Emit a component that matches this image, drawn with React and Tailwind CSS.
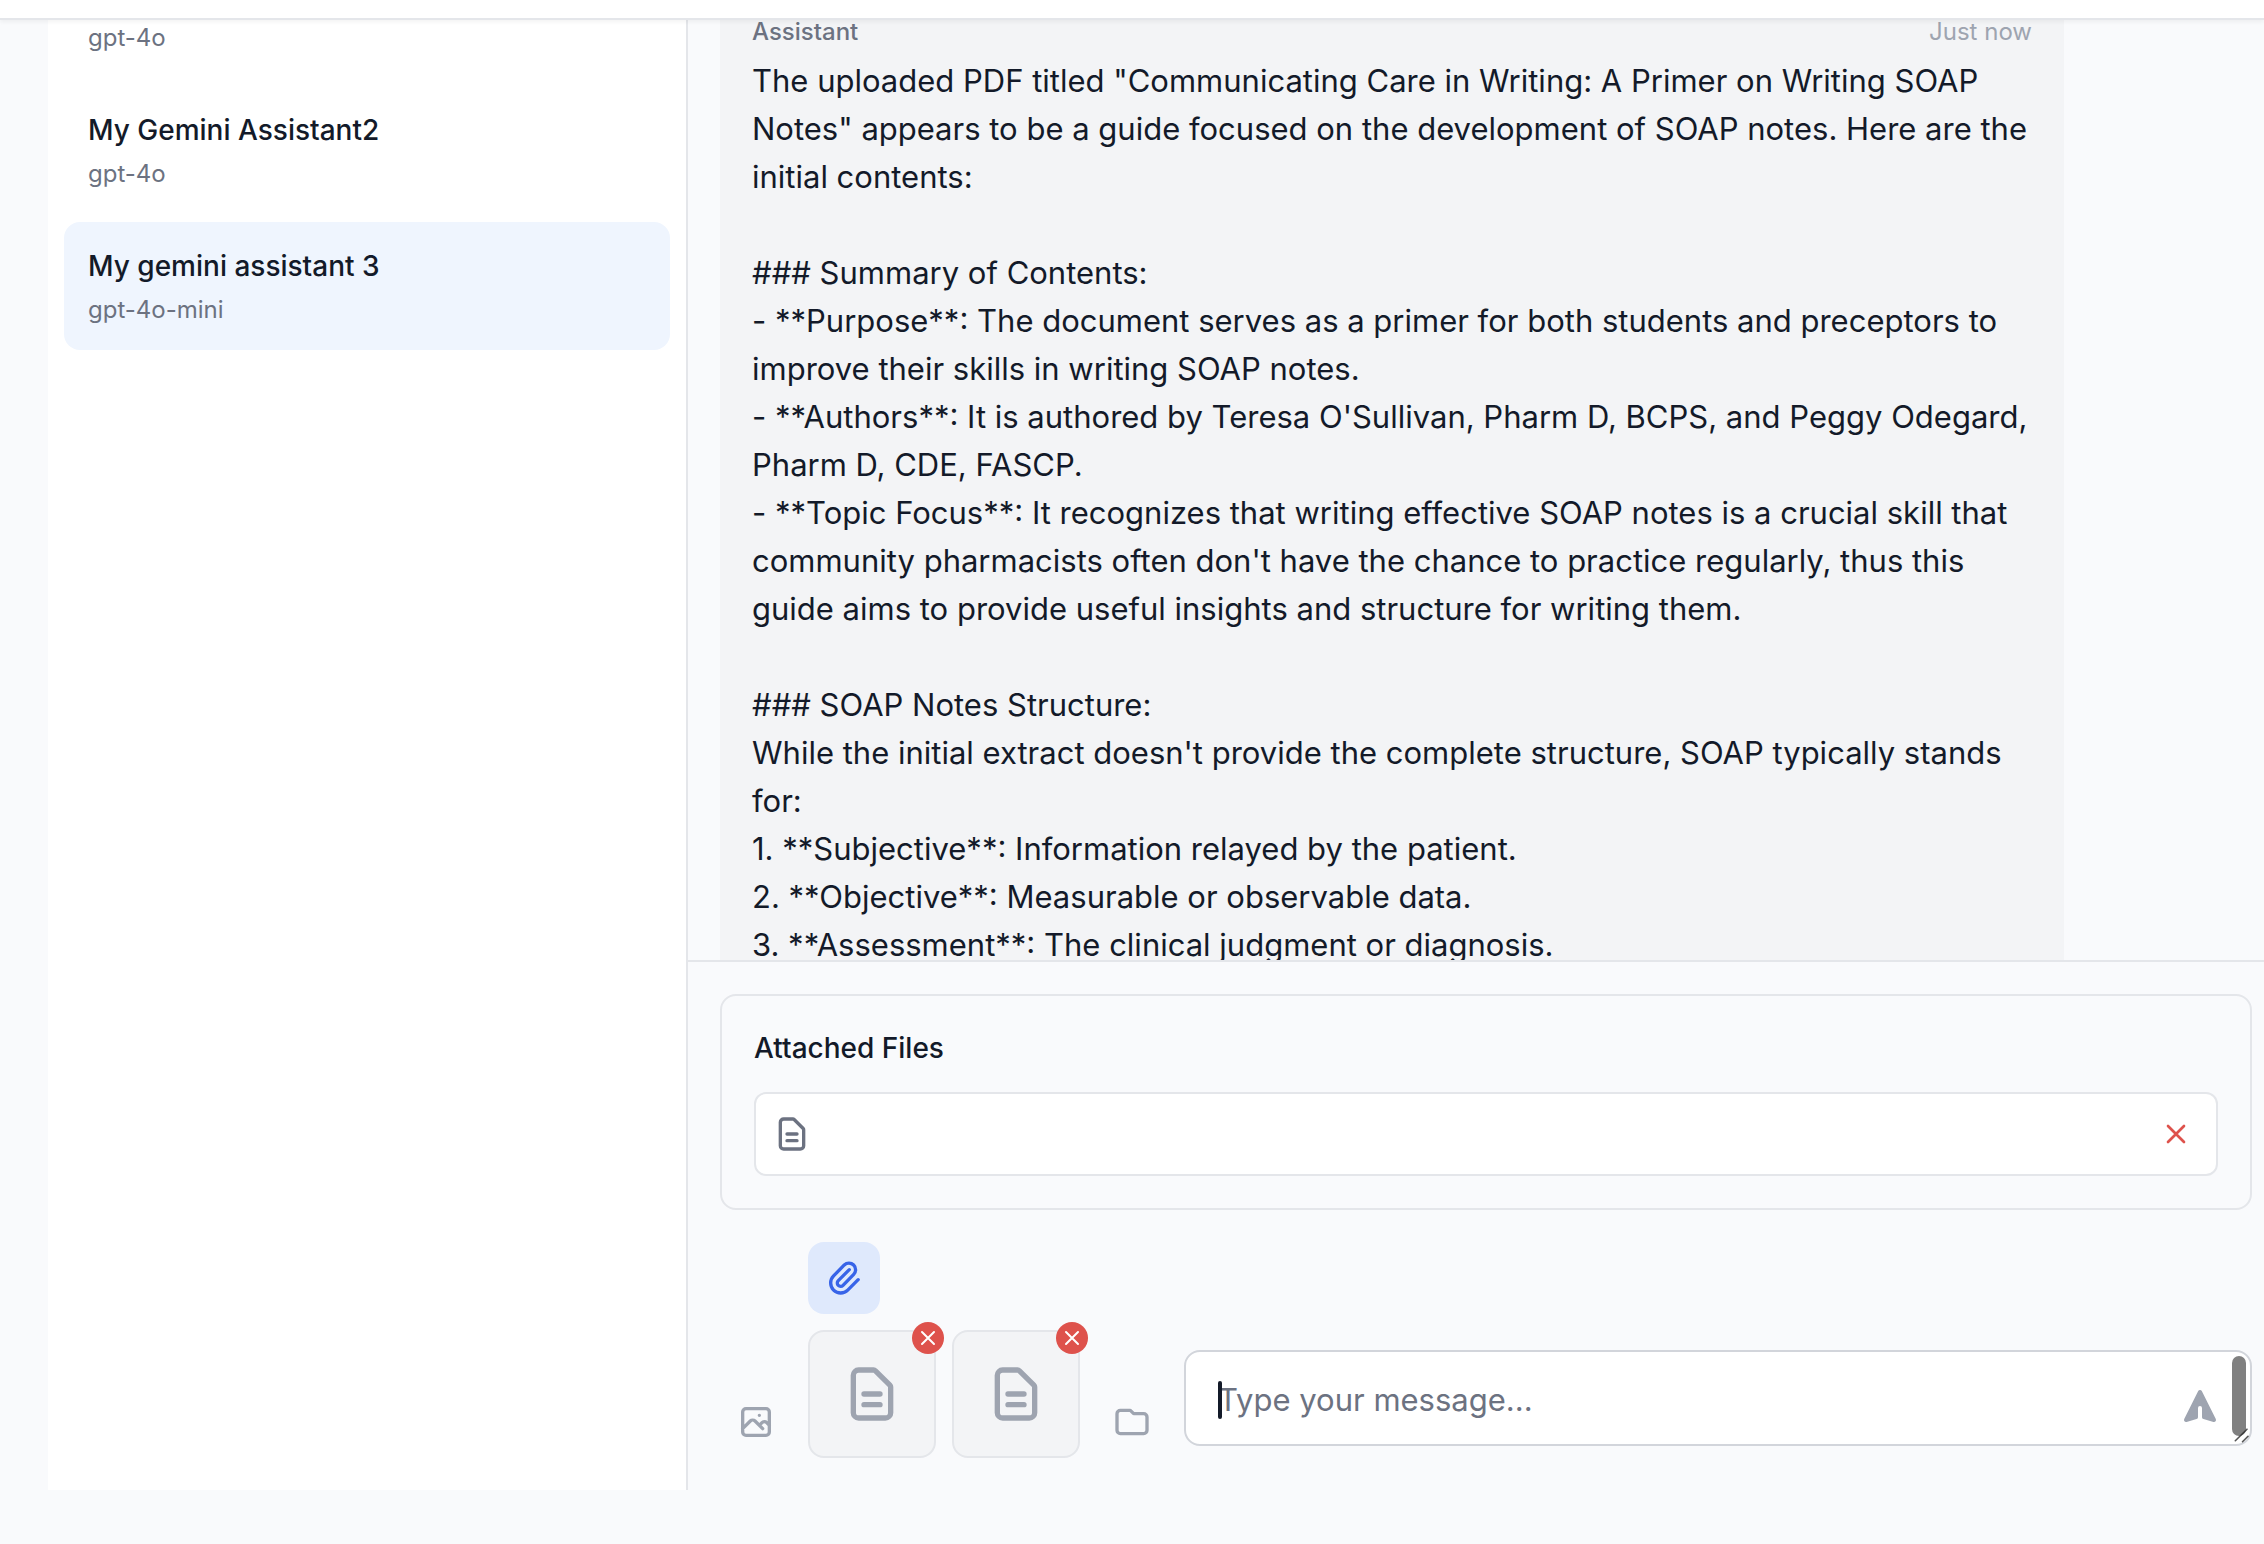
const messageLines = [
  'The uploaded PDF titled "Communicating Care in Writing: A Primer on Writing SOAP',
  'Notes" appears to be a guide focused on the development of SOAP notes. Here are the',
  'initial contents:',
  '',
  '### Summary of Contents:',
  '- **Purpose**: The document serves as a primer for both students and preceptors to',
  'improve their skills in writing SOAP notes.',
  "- **Authors**: It is authored by Teresa O'Sullivan, Pharm D, BCPS, and Peggy Odegard,",
  'Pharm D, CDE, FASCP.',
  '- **Topic Focus**: It recognizes that writing effective SOAP notes is a crucial skill that',
  "community pharmacists often don't have the chance to practice regularly, thus this",
  'guide aims to provide useful insights and structure for writing them.',
  '',
  '### SOAP Notes Structure:',
  "While the initial extract doesn't provide the complete structure, SOAP typically stands",
  'for:',
  '1. **Subjective**: Information relayed by the patient.',
  '2. **Objective**: Measurable or observable data.',
  '3. **Assessment**: The clinical judgment or diagnosis.',
];

function StrokeIcon({ d, className }) {
  return (
    <svg
      className={className}
      viewBox="0 0 24 24"
      fill="none"
      stroke="currentColor"
      strokeWidth="2"
      strokeLinecap="round"
      strokeLinejoin="round"
      aria-hidden="true"
    >
      <path d={d} />
    </svg>
  );
}

const DOCUMENT =
  'M9 12h6m-6 4h6m2 5H7a2 2 0 01-2-2V5a2 2 0 012-2h5.586a1 1 0 01.707.293l5.414 5.414a1 1 0 01.293.707V19a2 2 0 01-2 2z';
const CROSS = 'M6 18L18 6M6 6l12 12';
const CLIP =
  'M15.172 7l-6.586 6.586a2 2 0 102.828 2.828l6.414-6.586a4 4 0 00-5.656-5.656l-6.415 6.585a6 6 0 108.486 8.486L20.5 13';
const IMAGE =
  'M4 16l4.586-4.586a2 2 0 012.828 0L16 16m-2-2l1.586-1.586a2 2 0 012.828 0L20 14m-6-6h.01M6 20h12a2 2 0 002-2V6a2 2 0 00-2-2H6a2 2 0 00-2 2v12a2 2 0 002 2z';
const FOLDER = 'M3 7v10a2 2 0 002 2h14a2 2 0 002-2V9a2 2 0 00-2-2h-6l-2-2H5a2 2 0 00-2 2z';
const SEND =
  'M10.894 2.553a1 1 0 00-1.788 0l-7 14a1 1 0 001.169 1.409l5-1.429A1 1 0 009 15.571V11a1 1 0 112 0v4.571a1 1 0 00.725.962l5 1.428a1 1 0 001.17-1.408l-7-14z';

function AssistantItem({ name, model, active }) {
  return (
    <button
      type="button"
      className={
        'block w-full rounded-2xl p-6 text-left ' + (active ? 'bg-[#eff5fe]' : 'bg-white')
      }
    >
      <span className="mb-2 block text-[28px] leading-10 font-medium text-[#131a29]">{name}</span>
      <span className="block text-2xl leading-8 text-[#6c7281]">{model}</span>
    </button>
  );
}

function Sidebar() {
  return (
    <aside className="w-[640px] shrink-0 overflow-hidden border-r-2 border-[#e4e6ea] bg-white px-4 pt-0.5">
      <nav aria-label="Assistants" className="flex flex-col gap-2">
        <button type="button" className="block w-full px-6 pb-6 text-left text-2xl leading-8 text-[#6c7281]">
          gpt-4o
        </button>
        <AssistantItem name="My Gemini Assistant2" model="gpt-4o" />
        <AssistantItem name="My gemini assistant 3" model="gpt-4o-mini" active />
      </nav>
    </aside>
  );
}

function Message() {
  return (
    <article className="mr-[200px] ml-8 bg-[#f3f4f6] px-8 pb-8">
      <header className="mb-3 flex items-center justify-between text-2xl leading-6">
        <span className="font-medium text-[#6c7281]">Assistant</span>
        <time className="text-[#9ea4b0]">Just now</time>
      </header>
      <div className="pt-px text-[31px] leading-[48px] text-[#131a29]">
        {messageLines.map((line, i) => (
          <p key={i} className="min-h-12 whitespace-nowrap">
            {line}
          </p>
        ))}
      </div>
    </article>
  );
}

function AttachedFiles() {
  return (
    <section className="mb-8 rounded-2xl border-2 border-[#e4e6ea] p-8">
      <h2 className="mb-6 text-[28px] leading-10 font-medium text-[#131a29]">Attached Files</h2>
      <div className="flex items-center justify-between rounded-xl border-2 border-[#e4e6ea] bg-white p-4">
        <StrokeIcon d={DOCUMENT} className="size-10 text-[#6c7281]" />
        <button type="button" aria-label="Remove file" className="p-2 text-[#de524c]">
          <StrokeIcon d={CROSS} className="size-8" />
        </button>
      </div>
    </section>
  );
}

function Thumbnail() {
  return (
    <div className="relative flex size-32 items-center justify-center rounded-2xl border-2 border-[#e4e6ea] bg-[#f3f4f6]">
      <StrokeIcon d={DOCUMENT} className="size-16 text-[#9ea4b0]" />
      <button
        type="button"
        aria-label="Remove attachment"
        className="absolute -top-2.5 -right-2.5 flex size-8 items-center justify-center rounded-full bg-[#de524c] text-white"
      >
        <StrokeIcon d={CROSS} className="size-6" />
      </button>
    </div>
  );
}

function Composer() {
  return (
    <form className="flex items-end gap-4">
      <button type="button" aria-label="Add image" className="p-4 text-[#9ea4b0]">
        <StrokeIcon d={IMAGE} className="size-10" />
      </button>
      <div className="flex flex-col items-start gap-4">
        <button type="button" aria-label="Attach file" className="rounded-2xl bg-[#dfe9fc] p-4 text-[#3864e8]">
          <StrokeIcon d={CLIP} className="size-10" />
        </button>
        <div className="flex gap-4">
          <Thumbnail />
          <Thumbnail />
        </div>
      </div>
      <button type="button" aria-label="Add folder" className="p-4 text-[#9ea4b0]">
        <StrokeIcon d={FOLDER} className="size-10" />
      </button>
      <div className="relative flex-1 pb-3">
        <textarea
          aria-label="Message"
          rows={1}
          placeholder="Type your message..."
          className="block h-24 w-full resize-none overflow-hidden rounded-2xl border-2 border-[#d2d5db] bg-white px-8 py-6 text-[31px] leading-[48px] text-[#131a29] outline-none placeholder:text-[#6c7281]"
        />
        <span className="absolute top-[31px] left-[34px] h-[38px] w-1 rounded-xs bg-[#131a29]" />
        <button type="submit" aria-label="Send" className="absolute right-4 bottom-4 p-4 text-[#9ea4b0]">
          <svg viewBox="0 0 20 20" fill="currentColor" className="size-10" aria-hidden="true">
            <path d={SEND} />
          </svg>
        </button>
        <span className="absolute top-1.5 right-1.5 h-20 w-3.5 rounded-full bg-[#808080]" />
        <svg
          viewBox="0 0 16 16"
          className="absolute right-0.5 bottom-3.5 size-4"
          stroke="#2b2b2b"
          strokeOpacity="0.8"
          strokeWidth="1.6"
          strokeLinecap="round"
          aria-hidden="true"
        >
          <path d="M1.3 12.7L13 1.2M8.5 13.7L14 8.3" />
        </svg>
      </div>
    </form>
  );
}

export default function App() {
  return (
    <div
      className="flex h-screen flex-col overflow-hidden bg-[#f9fafc]"
      style={{ fontFamily: 'Inter, "Liberation Sans", sans-serif' }}
    >
      <div className="z-10 h-5 shrink-0 border-b-2 border-[#e4e6ea] bg-white shadow-[0_2px_4px_rgba(0,0,0,0.05)]" />
      <div className="flex min-h-0 flex-1 pb-[54px] pl-12">
        <Sidebar />
        <main className="flex min-w-0 flex-1 flex-col">
          <div className="min-h-0 flex-1 overflow-hidden">
            <Message />
          </div>
          <div className="border-t-2 border-[#e4e6ea] py-8 pr-3 pl-8">
            <AttachedFiles />
            <Composer />
          </div>
        </main>
      </div>
    </div>
  );
}
